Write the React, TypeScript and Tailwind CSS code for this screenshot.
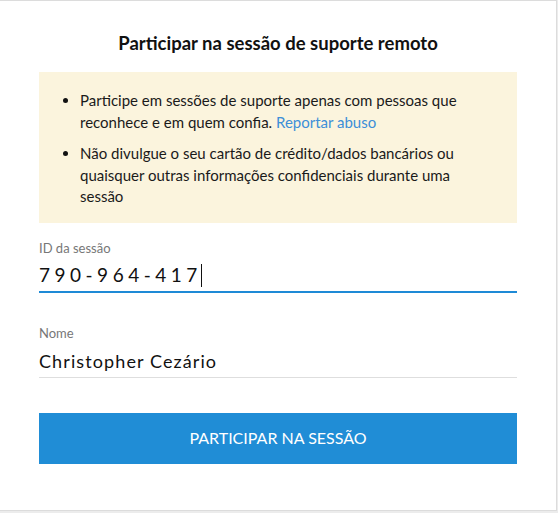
export default function App() {
  return (
    <div className="min-h-[513px] w-[558px] bg-[#ececec] font-['Lato','Open_Sans',sans-serif]">
      <div className="w-[557px] h-[511px] bg-white border-t border-r border-b border-[#dcdcdc] px-[39px] pt-[29px]">
        <h1 className="text-center text-[18.5px] leading-[26px] font-bold text-[#111]">
          Participar na sessão de suporte remoto
        </h1>

        <div className="mt-[16px] bg-[#fbf4dd] pl-[24px] pr-[44px] pt-[18px] pb-[15px] text-[15px] leading-[21.5px] text-[#1a1a1a]">
          <ul className="list-disc pl-[17px] space-y-[10px] marker:text-[#111]">
            <li>
              Participe em sessões de suporte apenas com pessoas que reconhece e em quem confia.{" "}
              <a href="#" className="text-[#3d8fd8]">Reportar abuso</a>
            </li>
            <li>
              Não divulgue o seu cartão de crédito/dados bancários ou quaisquer outras informações
              confidenciais durante uma sessão
            </li>
          </ul>
        </div>

        <div className="mt-[17px]">
          <label className="block text-[13px] leading-[16px] text-[#777]">ID da sessão</label>
          <div className="mt-[8px] flex items-center h-[24px] text-[19px] tracking-[4.5px] text-[#111]">
            790-964-417
            <span className="w-px h-[23px] bg-[#111] -ml-[1px]" />
          </div>
          <div className="mt-[3px] h-[2px] bg-[#1e8ad6]" />
        </div>

        <div className="mt-[32px]">
          <label className="block text-[13px] leading-[16px] text-[#777]">Nome</label>
          <div className="mt-[9px] h-[24px] flex items-center text-[18px] tracking-[1.1px] text-[#111]">
            Christopher Cezário
          </div>
          <div className="mt-[3px] h-px bg-[#dedede]" />
        </div>

        <button className="mt-[35px] w-full h-[51px] bg-[#208dd6] text-white text-[16px] leading-[20px] uppercase">
          Participar na sessão
        </button>
      </div>
    </div>
  );
}
